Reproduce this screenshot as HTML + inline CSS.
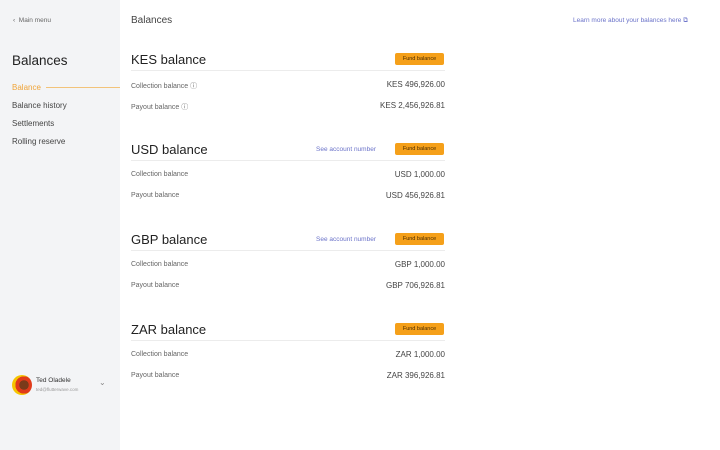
<!DOCTYPE html>
<html><head><style>
*{margin:0;padding:0;box-sizing:border-box}
body{width:720px;height:450px;background:#fff;font-family:"Liberation Sans",sans-serif;position:relative;overflow:hidden;color:#333}
.sb{position:absolute;left:0;top:0;width:120px;height:450px;background:#f3f4f6}
.a{position:absolute;white-space:nowrap}
.s{font-size:8px;color:#444}
.sec .t{font-size:13px;color:#222}
.btn{position:absolute;background:#f5a01a;color:#4a2c00;font-size:5.5px;width:49px;height:12px;line-height:12px;text-align:center;border-radius:2px}
.ln{position:absolute;left:131px;width:314px;height:1px;background:#ececec}
.lbl{font-size:7px;color:#666}
.val{font-size:8px;color:#444;text-align:right;right:275px}
.see{font-size:6.5px;color:#6b73c9}
</style></head><body>
<div class="sb"></div>
<div class="a" style="left:13px;top:17px;font-size:6.5px;color:#666">‹&nbsp;&nbsp;Main menu</div>
<div class="a" style="left:12px;top:53px;font-size:13.5px;color:#222">Balances</div>
<div class="a" style="left:12px;top:83px;font-size:8px;color:#f0a53a">Balance</div>
<div class="a" style="left:46px;top:87px;width:74px;height:1px;background:#f2c37a"></div>
<div class="a s" style="left:12px;top:101px">Balance history</div>
<div class="a s" style="left:12px;top:119px">Settlements</div>
<div class="a s" style="left:12px;top:137px">Rolling reserve</div>
<div class="a" style="left:12px;top:375px;width:20px;height:20px;border-radius:50%;background:radial-gradient(circle at 60% 50%,#7a3a1a 0 30%,#e03a1a 31% 55%,#f5c400 56%)"></div>
<div class="a" style="left:36px;top:377px;font-size:6.5px;color:#333">Ted Oladele</div>
<div class="a" style="left:36px;top:387px;font-size:4.5px;color:#999">ted@flutterwave.com</div>
<div class="a" style="left:99px;top:378px;font-size:8px;color:#888">⌄</div>
<div class="a" style="left:131px;top:15px;font-size:10px;color:#444">Balances</div>
<div class="a see" style="left:573px;top:17px">Learn more about your balances here ⧉</div>

<div class="sec">
<div class="a t" style="left:131px;top:52px">KES balance</div>
<div class="btn" style="left:395px;top:53px">Fund balance</div>
<div class="ln" style="top:70px"></div>
<div class="a lbl" style="left:131px;top:81px">Collection balance ⓘ</div>
<div class="a val" style="top:80px">KES 496,926.00</div>
<div class="a lbl" style="left:131px;top:102px">Payout balance ⓘ</div>
<div class="a val" style="top:101px">KES 2,456,926.81</div>
</div>
<div class="sec">
<div class="a t" style="left:131px;top:142px">USD balance</div>
<div class="a see" style="left:316px;top:146px">See account number</div>
<div class="btn" style="left:395px;top:143px">Fund balance</div>
<div class="ln" style="top:160px"></div>
<div class="a lbl" style="left:131px;top:171px">Collection balance</div>
<div class="a val" style="top:170px">USD 1,000.00</div>
<div class="a lbl" style="left:131px;top:192px">Payout balance</div>
<div class="a val" style="top:191px">USD 456,926.81</div>
</div>
<div class="sec">
<div class="a t" style="left:131px;top:232px">GBP balance</div>
<div class="a see" style="left:316px;top:236px">See account number</div>
<div class="btn" style="left:395px;top:233px">Fund balance</div>
<div class="ln" style="top:250px"></div>
<div class="a lbl" style="left:131px;top:261px">Collection balance</div>
<div class="a val" style="top:260px">GBP 1,000.00</div>
<div class="a lbl" style="left:131px;top:282px">Payout balance</div>
<div class="a val" style="top:281px">GBP 706,926.81</div>
</div>
<div class="sec">
<div class="a t" style="left:131px;top:322px">ZAR balance</div>
<div class="btn" style="left:395px;top:323px">Fund balance</div>
<div class="ln" style="top:340px"></div>
<div class="a lbl" style="left:131px;top:351px">Collection balance</div>
<div class="a val" style="top:350px">ZAR 1,000.00</div>
<div class="a lbl" style="left:131px;top:372px">Payout balance</div>
<div class="a val" style="top:371px">ZAR 396,926.81</div>
</div>
</body></html>
